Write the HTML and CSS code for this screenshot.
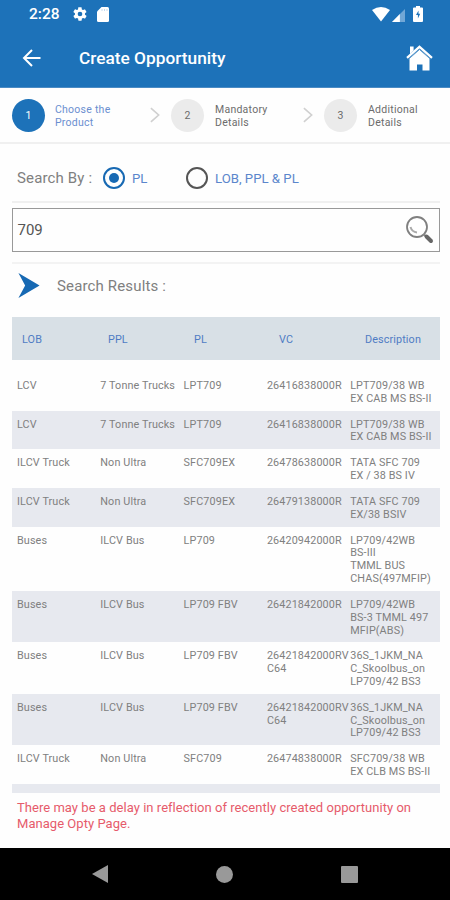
FILE: index.html
```html
<!DOCTYPE html>
<html lang="en">

<head>
    <meta charset="utf-8">
    <title>Create Opportunity</title>
    <link rel="stylesheet" href="styles.css">
</head>

<body>
    <header class="header">
        <div class="status-bar">
            <span class="time">2:28</span>
            <svg class="gear" width="16" height="16" viewBox="0 0 24 24"><path fill="#fff" d="M19.4 13c0-.3.1-.6.1-1s0-.7-.1-1l2.1-1.6c.2-.2.2-.4.1-.6l-2-3.5c-.1-.2-.4-.3-.6-.2l-2.5 1c-.5-.4-1.1-.7-1.7-1l-.4-2.6c0-.3-.2-.5-.5-.5h-4c-.2 0-.5.2-.5.4l-.4 2.7c-.6.2-1.1.6-1.7 1L4.900 5c-.3 0-.5 0-.7.3l-2 3.500c-.1.200 0 .4.200.6L4.500 11c0 .3-.1.600-.1 1s0 .7.1 1l-2.100 1.600c-.2.200-.2.400-.1.600l2 3.500c.1.200.4.300.6.200l2.500-1c.5.400 1.100.700 1.700 1l.4 2.600c0 .3.300.500.5.500h4c.3 0 .5-.2.5-.5l.4-2.600c.6-.3 1.200-.6 1.700-1l2.500 1c.2.100.5 0 .6-.2l2-3.500c.1-.2.100-.4-.1-.6zM12 15.500a3.500 3.500 0 1 1 0-7 3.500 3.500 0 0 1 0 7z"/></svg>
            <svg class="sd" width="12" height="15" viewBox="0 0 12 15"><path fill="#fff" d="M4.500 0H10.500Q12 0 12 1.500V13.500Q12 15 10.500 15H1.500Q0 15 0 13.500V4.500Z"/><path stroke="#c5daee" d="M5 2v2M7.500 2v2M10 2v2"/></svg>
            <svg class="wifi" width="18" height="15" viewBox="0 0 18 15"><path fill="#fff" d="M0 3Q9-3 18 3L9 14.500Z"/></svg>
            <svg class="signal" width="13" height="13" viewBox="0 0 14 14"><path fill="#71a7d6" d="M14 0V14H0Z"/><path fill="#fff" d="M8.500 5.500V14H0Z"/></svg>
            <svg class="battery" width="10" height="16" viewBox="0 0 10 16"><path fill="#fff" d="M3 0h4v1.600h2q1 0 1 1V15q0 1-1 1H1q-1 0-1-1V2.600q0-1 1-1h2z"/><path fill="#1d72b9" d="M5.500 4.500L3 9h1.900v3.400l2.300-4.600H5.500z"/></svg>
        </div>
        <div class="title-bar">
            <svg class="back" width="19" height="18" viewBox="0 0 19 18"><path fill="none" stroke="#fff" stroke-width="2" d="M18.500 9H2M10 1L2 9l8 8"/></svg>
            <h1>Create Opportunity</h1>
            <svg class="home" width="27" height="26" viewBox="0 0 27 26"><path fill="#fff" d="M4 1.500h3.600v4L4 9z"/><path fill="#fff" d="M13.500 4.500L23.500 13V25.500H16.500V19.500H11V25.500H3.500V13z"/><path fill="none" stroke="#5d9bce" stroke-width="1" d="M2.500 14.200L13.500 4.500l11 9.700"/><path fill="none" stroke="#fff" stroke-width="2.200" d="M1 12.800L13.500 1.800l12.500 11"/></svg>
        </div>
    </header>

    <nav class="steps">
        <div class="step active"><span class="num">1</span><span>Choose the<br>Product</span></div>
        <svg class="chevron" width="10" height="16" viewBox="0 0 11 17"><path d="M1 1l8.500 7.500L1 16"/></svg>
        <div class="step"><span class="num">2</span><span>Mandatory<br>Details</span></div>
        <svg class="chevron" width="10" height="16" viewBox="0 0 11 17"><path d="M1 1l8.500 7.500L1 16"/></svg>
        <div class="step"><span class="num">3</span><span>Additional<br>Details</span></div>
    </nav>

    <main>
        <div class="search-by">
            <span class="label">Search By :</span>
            <span class="radio checked"></span>
            <span class="option first">PL</span>
            <span class="radio"></span>
            <span class="option">LOB, PPL &amp; PL</span>
        </div>

        <div class="search-box">
            <span>709</span>
            <svg width="30" height="30" viewBox="0 0 30 30"><circle cx="12" cy="12" r="10" fill="#fff" stroke="#808080" stroke-width="1.800"/><path fill="none" stroke="#aaa" stroke-width="2" d="M5.500 12Q7 17 12 17.500"/><path stroke="#888" stroke-width="2" d="M18.500 19l3 3"/><path stroke="#666" stroke-width="4" stroke-linecap="round" d="M21.500 21.500l4.500 4.500"/></svg>
        </div>

        <div class="results-title">
            <svg width="22" height="25" viewBox="0 0 22 26"><path fill="#1769b3" d="M0 0L22 13L0 26L7 13Z"/></svg>
            <h2>Search Results :</h2>
        </div>

        <div class="row table-head">
            <span>LOB</span><span>PPL</span><span>PL</span><span>VC</span><span>Description</span>
        </div>
        <div class="table-body">
            <div class="row"><span>LCV</span><span>7 Tonne Trucks</span><span>LPT709</span><span>26416838000R</span><span>LPT709/38 WB<br>EX CAB MS BS-II</span></div>
            <div class="row"><span>LCV</span><span>7 Tonne Trucks</span><span>LPT709</span><span>26416838000R</span><span>LPT709/38 WB<br>EX CAB MS BS-II</span></div>
            <div class="row"><span>ILCV Truck</span><span>Non Ultra</span><span>SFC709EX</span><span>26478638000R</span><span>TATA SFC 709<br>EX / 38 BS IV</span></div>
            <div class="row"><span>ILCV Truck</span><span>Non Ultra</span><span>SFC709EX</span><span>26479138000R</span><span>TATA SFC 709<br>EX/38 BSIV</span></div>
            <div class="row"><span>Buses</span><span>ILCV Bus</span><span>LP709</span><span>26420942000R</span><span>LP709/42WB<br>BS-III<br>TMML BUS<br>CHAS(497MFIP)</span></div>
            <div class="row"><span>Buses</span><span>ILCV Bus</span><span>LP709 FBV</span><span>26421842000R</span><span>LP709/42WB<br>BS-3 TMML 497<br>MFIP(ABS)</span></div>
            <div class="row"><span>Buses</span><span>ILCV Bus</span><span>LP709 FBV</span><span>26421842000RV<br>C64</span><span>36S_1JKM_NA<br>C_Skoolbus_on<br>LP709/42 BS3</span></div>
            <div class="row"><span>Buses</span><span>ILCV Bus</span><span>LP709 FBV</span><span>26421842000RV<br>C64</span><span>36S_1JKM_NA<br>C_Skoolbus_on<br>LP709/42 BS3</span></div>
            <div class="row"><span>ILCV Truck</span><span>Non Ultra</span><span>SFC709</span><span>26474838000R</span><span>SFC709/38 WB<br>EX CLB MS BS-II</span></div>
            <div class="row"></div>
        </div>

        <p class="notice">There may be a delay in reflection of recently created opportunity on<br>Manage Opty Page.</p>
    </main>

    <footer class="nav-bar">
        <svg width="16" height="18" viewBox="0 0 16 18"><path fill="#999" d="M16 0V18L0 9Z"/></svg>
        <svg width="17" height="17" viewBox="0 0 16 16"><circle cx="8" cy="8" r="8" fill="#999"/></svg>
        <svg width="17" height="17" viewBox="0 0 17 17"><rect width="17" height="17" rx="1" fill="#999"/></svg>
    </footer>
</body>

</html>
```

FILE: styles.css
```css
* {
    box-sizing: border-box;
}

body {
    margin: 0;
    width: 450px;
    height: 900px;
    display: flex;
    flex-direction: column;
    overflow: hidden;
    background-color: #fefefe;
    font-family: Roboto, sans-serif;
    color: #808080;
}

h1, h2, p {
    margin: 0;
    font-weight: normal;
}

svg {
    display: block;
    flex: none;
}

.header {
    height: 88px;
    background-color: #1d72b9;
    border-bottom: 1px solid #4b8bc4;
    color: #fff;
}

.status-bar {
    display: flex;
    align-items: center;
    height: 28px;
    padding: 0 27px 0 29px;
}

.time {
    width: 43px;
    font-size: 15.5px;
    font-weight: 500;
}

.sd {
    margin-left: 9px;
}

.wifi {
    margin-left: auto;
}

.signal {
    margin: 2px 8px 0 2px;
}

.title-bar {
    display: flex;
    align-items: center;
    height: 59px;
    padding: 0 17px 0 22px;
}

.title-bar h1 {
    flex: 1;
    margin-left: 38px;
    font-size: 17.3px;
    font-weight: 500;
}

.steps {
    display: flex;
    align-items: center;
    height: 56px;
    padding-left: 12px;
    border-bottom: 2px solid #f0f0f0;
    font-size: 10.5px;
    line-height: 13px;
    letter-spacing: 0.25px;
    color: #6c6c6c;
}

.step {
    display: flex;
    flex: none;
    align-items: center;
    gap: 11px;
    width: 132px;
}

.step.active {
    gap: 10px;
    width: 138px;
    color: #6b8fd0;
}

.num {
    width: 33px;
    height: 33px;
    border-radius: 50%;
    background-color: #ebebeb;
    line-height: 34px;
    text-align: center;
}

.num + span {
    padding-top: 2px;
}

.active .num {
    background-color: #1d72b9;
    color: #fff;
}

.chevron {
    margin-right: 11px;
    fill: none;
    stroke: #d0d0d0;
    stroke-width: 1.8;
}

main {
    height: 704px;
    padding: 0 10px 0 11.5px;
}

.search-by {
    display: flex;
    align-items: center;
    height: 59px;
    padding: 11px 0 0 5.5px;
    border-bottom: 2px solid #f0f0f0;
    font-size: 15px;
}

.label {
    width: 86px;
    letter-spacing: 0.15px;
}

.radio {
    width: 22px;
    height: 22px;
    border: 2px solid #555;
    border-radius: 50%;
}

.checked {
    padding: 4px;
    border-color: #1769b3;
    background: #1769b3 content-box;
}

.option {
    margin-left: 7px;
    font-size: 13.2px;
    color: #5b86cc;
}

.first {
    width: 54px;
}

.search-box {
    display: flex;
    align-items: center;
    justify-content: space-between;
    height: 44px;
    margin: 5px 0 10px;
    padding: 0 4px 0 5px;
    border: 1px solid #999;
    font-size: 15px;
    color: #555;
}

.results-title {
    display: flex;
    align-items: center;
    height: 55px;
    padding: 0 0 10px 6.5px;
    border-top: 2px solid #f3f3f3;
}

.results-title h2 {
    margin: 1px 0 0 17px;
    font-size: 15px;
    letter-spacing: 0.15px;
}

.row {
    display: grid;
    grid-template-columns: repeat(5, 83.3px);
    padding: 8px 0 4.95px 5.5px;
    font-size: 10.8px;
    line-height: 12.85px;
    letter-spacing: 0.12px;
    white-space: nowrap;
}

.row:nth-child(even) {
    background-color: #e7e9ef;
}

.row.table-head {
    grid-template-columns: 86px 86px 85px 86px 80px;
    align-items: center;
    height: 43px;
    margin-bottom: 12px;
    padding-left: 10.5px;
    background-color: #d8e0e6;
    color: #4f7cc4;
}

.table-body {
    height: 421px;
    overflow: hidden;
}

/* the list is cut off here, so the last row needs a height of its own */
.row:empty {
    height: 20px;
}

.notice {
    padding: 7px 0 0 5.5px;
    font-size: 13px;
    line-height: 15.5px;
    letter-spacing: 0.035px;
    color: #e65b6b;
    white-space: nowrap;
}

.nav-bar {
    display: flex;
    align-items: center;
    justify-content: space-between;
    height: 52px;
    padding: 0 92px;
    background-color: #000;
}
```
